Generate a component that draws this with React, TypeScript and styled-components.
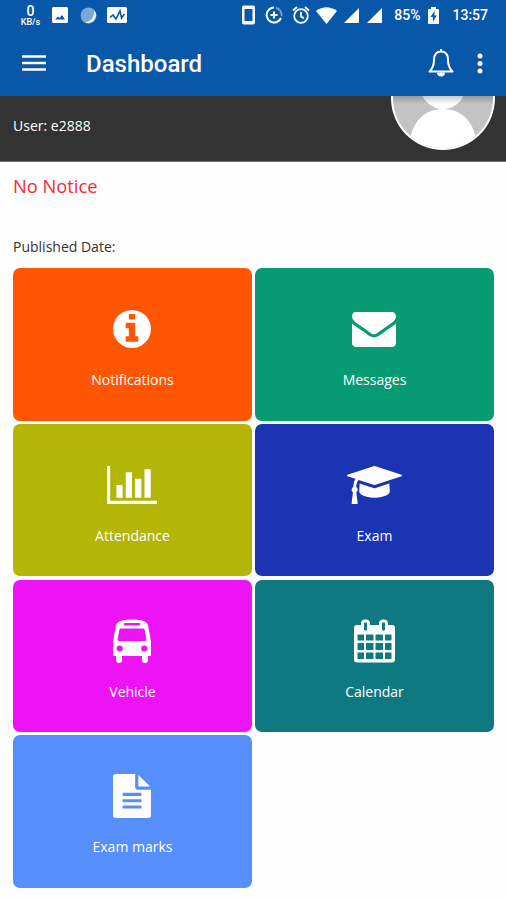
import React from "react";
import styled, { createGlobalStyle } from "styled-components";

const GlobalStyle = createGlobalStyle`
  * { box-sizing: border-box; }
  body { margin: 0; background: #fff; font-family: "Open Sans", "Noto Sans", sans-serif; }
`;

const Screen = styled.div`
  width: 506px;
  height: 900px;
  overflow: hidden;
  background: #fefefe;
`;

const Header = styled.header`
  height: 96px;
  background: #0857a9;
  color: #fff;
  font-family: Roboto, sans-serif;
`;

const StatusBar = styled.div`
  height: 30px;
  padding: 0 18px 0 20px;
  display: flex;
  align-items: center;
  justify-content: space-between;
`;

const StatusGroup = styled.div`
  display: flex;
  align-items: center;
`;

const Speed = styled.div`
  width: 21px;
  display: flex;
  flex-direction: column;
  align-items: center;
  font-weight: 500;
`;

const SpeedValue = styled.span`
  font-size: 14px;
  line-height: 14px;
`;

const SpeedUnit = styled.span`
  font-size: 9px;
  line-height: 9px;
  font-weight: 500;
`;

const StatusText = styled.span<{ $gap: number }>`
  margin-left: ${(p) => p.$gap}px;
  font-size: 14px;
  line-height: 16px;
  font-weight: 500;
  white-space: nowrap;
`;

const Glyph = styled.svg<{ $gap?: number }>`
  display: block;
  flex: none;
  margin-left: ${(p) => p.$gap ?? 0}px;
`;

const AppBar = styled.div`
  height: 66px;
  padding: 0 23px 0 22px;
  display: flex;
  align-items: center;
`;

const Title = styled.h1`
  margin: 1px 0 0 40px;
  flex: 1;
  font-size: 24px;
  line-height: 30px;
  font-weight: 500;
`;

const UserBand = styled.section`
  height: 66px;
  padding: 0 11px 0 13px;
  display: flex;
  justify-content: space-between;
  background: #333;
  border-bottom: 1px solid #777;
  overflow: hidden;
`;

const UserName = styled.div`
  padding-top: 20px;
  color: #fff;
  font-size: 14px;
  line-height: 19px;
`;

const Content = styled.main`
  padding: 0 12px 0 13px;
`;

const Notice = styled.div`
  height: 75px;
  padding-top: 11px;
  color: #fb2733;
  font-size: 18.300px;
  line-height: 25px;
  font-weight: 400;
`;

const Published = styled.div`
  height: 31px;
  color: #333;
  font-size: 14px;
  line-height: 19px;
`;

const Grid = styled.div`
  display: grid;
  grid-template-columns: 239px 239px;
  grid-auto-rows: 152.6px;
  gap: 3.2px 3px;
`;

const Tile = styled.button<{ $color: string }>`
  padding: 39px 0 0;
  border: 0;
  border-radius: 7px;
  background: ${(p) => p.$color};
  color: #fff;
  font: 400 14px/20px "Open Sans", "Noto Sans", sans-serif;
  display: flex;
  flex-direction: column;
  align-items: center;
`;

const IconSlot = styled.span`
  height: 44px;
  margin: 0 1px 19px 0;
  display: flex;
  align-items: center;
`;

type IconSpec = { box: string; w: number; h: number; d: string };

const icons: Record<string, IconSpec> = {
  info: {
    box: "128 128 1536 1536", w: 38, h: 38,
    d: "M1152 1376v-160q0-14-9-23t-23-9h-96v-512q0-14-9-23t-23-9h-320q-14 0-23 9t-9 23v160q0 14 9 23t23 9h96v320h-96q-14 0-23 9t-9 23v160q0 14 9 23t23 9h448q14 0 23-9t9-23zM1024 480v-160q0-14-9-23t-23-9h-192q-14 0-23 9t-9 23v160q0 14 9 23t23 9h192q14 0 23-9t9-23zM1664 896q0 209-103 385.500t-279.500 279.500-385.500 103-385.500-103-279.500-279.500-103-385.500 103-385.500 279.500-279.500 385.500-103 385.500 103 279.500 279.500 103 385.500z",
  },
  envelope: {
    box: "0 256 1792 1408", w: 44, h: 35,
    d: "M1792 710v794q0 66-47 113t-113 47h-1472q-66 0-113-47t-47-113v-794q44 49 101 87 362 246 497 345 57 42 92.500 65.500t94.500 48 110 24.500h2q51 0 110-24.500t94.500-48 92.500-65.500q170-123 498-345 57-39 100-87zM1792 416q0 79-49 151t-122 123q-376 261-468 325-10 7-42.500 31t-54 38.500-52 32.500-57.500 27-50 9h-2q-23 0-50-9t-57.500-27-52-32.500-54-38.500-42.500-31q-91-64-262-182.500t-205-142.500q-62-42-117-115.500t-55-136.500q0-78 41.500-130t118.500-52h1472q65 0 112.500 47t47.500 113z",
  },
  chart: {
    box: "0 128 2048 1536", w: 50, h: 38,
    d: "M640 896v512h-256v-512zM1024 384v1024h-256v-1024zM2048 1536v128h-2048v-1536h128v1408zM1408 640v768h-256v-768zM1792 256v1152h-256v-1152z",
  },
  cap: {
    box: "0 128 2304 1536", w: 55, h: 38,
    d: "M1774 836l18 316q4 69-82 128t-235 93.500-323 34.500-323-34.500-235-93.500-82-128l18-316 574 181q22 7 48 7t48-7zM2304 512q0 23-22 31l-1120 352q-4 1-10 1t-10-1l-652-206q-43 34-71 111.500t-34 178.500q63 36 63 109 0 69-58 107l58 433q2 14-8 25-9 11-24 11h-192q-15 0-24-11-10-11-8-25l58-433q-58-38-58-107 0-73 65-111 11-207 98-330l-333-104q-22-8-22-31t22-31l1120-352q4-1 10-1t10 1l1120 352q22 8 22 31z",
  },
  bus: {
    box: "0 0 38 44", w: 38, h: 44,
    d: "M3 6C4 2 11 .500 19 .500S34 2 35 6L37 17Q38 21 38 27V37H35V41A3 3 0 0 1 29 41V37H9V41A3 3 0 0 1 3 41V37H0V27Q0 21 1 17ZM12 4A1.200 1.200 0 0 0 12 6.400H26A1.200 1.200 0 0 0 26 4ZM8 9.500Q6.700 9.500 6.400 10.800L4.600 20Q4.500 22 6 22H32Q33.500 22 33.400 20L31.600 10.800Q31.300 9.500 30 9.500ZM9.800 29.500A3.100 3.100 0 1 0 3.600 29.500A3.100 3.100 0 1 0 9.800 29.500ZM34.400 29.500A3.100 3.100 0 1 0 28.200 29.500A3.100 3.100 0 1 0 34.400 29.500Z",
  },
  calendar: {
    box: "0 0 41 44", w: 41, h: 44,
    d: "M3 6H7V4A4 4 0 0 1 11 .500H12A4 4 0 0 1 16 4V6H25V4A4 4 0 0 1 29 .500H30A4 4 0 0 1 34 4V6H38A3 3 0 0 1 41 9V40.500A3 3 0 0 1 38 43.500H3A3 3 0 0 1 0 40.500V9A3 3 0 0 1 3 6ZM11 3.500Q10 3.500 10 4.500V10.500Q10 11.500 11 11.500H12Q13 11.500 13 10.500V4.500Q13 3.500 12 3.500ZM29 3.500Q28 3.500 28 4.500V10.500Q28 11.500 29 11.500H30Q31 11.500 31 10.500V4.500Q31 3.500 30 3.500ZM3.500 15.500V21.500H10V15.500ZM12 15.500V21.500H19.500V15.500ZM21.500 15.500V21.500H29V15.500ZM31 15.500V21.500H37.500V15.500ZM3.500 24V31H10V24ZM12 24V31H19.500V24ZM21.500 24V31H29V24ZM31 24V31H37.500V24ZM3.500 33.500V40H10V33.500ZM12 33.500V40H19.500V33.500ZM21.500 33.500V40H29V33.500ZM31 33.500V40H37.500V33.500Z",
  },
  file: {
    box: "128 0 1536 1792", w: 38, h: 44,
    d: "M1596 476q14 14 28 36h-472v-472q22 14 36 28zM1120 640h544v1056q0 40-28 68t-68 28h-1344q-40 0-68-28t-28-68v-1600q0-40 28-68t68-28h800v544q0 40 28 68t68 28zM1280 1376v-64q0-14-9-23t-23-9h-704q-14 0-23 9t-9 23v64q0 14 9 23t23 9h704q14 0 23-9t9-23zM1280 1120v-64q0-14-9-23t-23-9h-704q-14 0-23 9t-9 23v64q0 14 9 23t23 9h704q14 0 23-9t9-23zM1280 864v-64q0-14-9-23t-23-9h-704q-14 0-23 9t-9 23v64q0 14 9 23t23 9h704q14 0 23-9t9-23z",
  },
};

const tiles = [
  { label: "Notifications", color: "#ff5604", icon: "info" },
  { label: "Messages", color: "#069b70", icon: "envelope" },
  { label: "Attendance", color: "#b3b507", icon: "chart" },
  { label: "Exam", color: "#1a34b3", icon: "cap" },
  { label: "Vehicle", color: "#ed13f5", icon: "bus" },
  { label: "Calendar", color: "#0f7982", icon: "calendar" },
  { label: "Exam marks", color: "#568ffb", icon: "file" },
];

function TileIcon({ name }: { name: string }) {
  const i = icons[name];
  return (
    <Glyph width={i.w} height={i.h} viewBox={i.box} preserveAspectRatio="none" fill="#fff">
      <path fillRule="evenodd" d={i.d} />
    </Glyph>
  );
}

function StatusIcons() {
  return (
    <StatusBar>
      <StatusGroup>
        <Speed>
          <SpeedValue>0</SpeedValue>
          <SpeedUnit>KB/s</SpeedUnit>
        </Speed>
        <Glyph $gap={11} width="16" height="16" viewBox="0 0 16 16">
          <rect width="16" height="16" rx="1.500" fill="#fff" />
          <path d="M3 12.500L6 9.500L7.500 11L10 8L13 12.500Z" fill="#0857a9" />
        </Glyph>
        <Glyph $gap={12} width="17" height="17" viewBox="0 0 17 17">
          <circle cx="8.500" cy="8.500" r="8" fill="#79a9d8" />
          <path d="M14.500 3.500A8 8 0 0 1 5 15.500Q14 14 14.500 3.500Z" fill="#e5f0fa" />
        </Glyph>
        <Glyph $gap={10} width="20" height="16" viewBox="0 0 20 16">
          <rect width="20" height="16" rx="1.500" fill="#fff" />
          <path d="M3 10.500L6 8L9 12L13 4L14.500 11L17.500 7" fill="none" stroke="#0857a9" strokeWidth="1.600" />
        </Glyph>
      </StatusGroup>
      <StatusGroup>
        <Glyph width="13" height="20" viewBox="0 0 13 20">
          <path fillRule="evenodd" fill="#fff" d="M2 .500H11Q13 .500 13 2.500V17.500Q13 19.500 11 19.500H2Q0 19.500 0 17.500V2.500Q0 .500 2 .500ZM2.500 4V16H10.500V4Z" />
        </Glyph>
        <Glyph $gap={10} width="18" height="18" viewBox="0 0 18 18" fill="none" stroke="#fff" strokeWidth="2">
          <path d="M9 1.500A7.500 7.500 0 1 0 16 12M9 5.500V12.500M5.500 9H12.500" />
          <path d="M11 1.800A7.500 7.500 0 0 1 16.500 10" stroke="#6aa0d4" />
        </Glyph>
        <Glyph $gap={9} width="18" height="18" viewBox="0 0 18 18" fill="none" stroke="#fff" strokeWidth="1.800">
          <circle cx="9" cy="10" r="6.800" />
          <path d="M9 6V10.500L12 12.200M1 4.500L5 1M17 4.500L13 1" />
        </Glyph>
        <Glyph $gap={6} width="21" height="17" viewBox="0 0 21 17" fill="#fff">
          <path d="M0 4Q10.500-3.500 21 4L10.500 17Z" />
        </Glyph>
        <Glyph $gap={7} width="15" height="15" viewBox="0 0 15 15" fill="#fff"><path d="M0 15L15 0V15Z" /></Glyph>
        <Glyph $gap={8} width="15" height="15" viewBox="0 0 15 15" fill="#fff"><path d="M0 15L15 0V15Z" /></Glyph>
        <StatusText $gap={12}>85%</StatusText>
        <Glyph $gap={8} width="11" height="17" viewBox="0 0 11 17">
          <path fill="#fff" d="M3 0H8V2H10Q11 2 11 3V16Q11 17 10 17H1Q0 17 0 16V3Q0 2 1 2H3Z" />
          <path fill="#0857a9" d="M6.500 4L2.500 10H5V15L8.700 8.500H6.500Z" />
        </Glyph>
        <StatusText $gap={13}>13:57</StatusText>
      </StatusGroup>
    </StatusBar>
  );
}

export default function App() {
  return (
    <>
      <GlobalStyle />
      <Screen>
        <Header>
          <StatusIcons />
          <AppBar>
            <Glyph width="24" height="16" viewBox="0 0 24 16" stroke="#fff" strokeWidth="2.300">
              <path d="M0 1.500H24M0 8H24M0 14.500H24" />
            </Glyph>
            <Title>Dashboard</Title>
            <Glyph width="26" height="28" viewBox="0 0 26 28" fill="none" stroke="#fff" strokeWidth="2">
              <path d="M13 2.500C8 2.500 6 6.500 6 11C6 17 4 20 1.500 22.500H24.500C22 20 20 17 20 11C20 6.500 18 2.500 13 2.500ZM13 0V3" strokeLinejoin="round" />
              <path d="M9 23.500A4 4 0 0 0 17 23.500Z" fill="#fff" stroke="none" />
            </Glyph>
            <Glyph $gap={23} width="6" height="21" viewBox="0 0 6 21" fill="#fff">
              <circle cx="3" cy="3" r="2.500" /><circle cx="3" cy="10.500" r="2.500" /><circle cx="3" cy="18" r="2.500" />
            </Glyph>
          </AppBar>
        </Header>
        <UserBand>
          <UserName>User: e2888</UserName>
          <Glyph width="104" height="55" viewBox="0 0 104 55">
            <defs>
              <clipPath id="avatar"><circle cx="52" cy="2" r="50" /></clipPath>
              <linearGradient id="shade" x1="0" y1="0" x2="0" y2="1">
                <stop offset="0" stopColor="#000" stopOpacity=".22" />
                <stop offset="1" stopColor="#000" stopOpacity="0" />
              </linearGradient>
            </defs>
            <circle cx="52" cy="2" r="52" fill="#fff" />
            <g clipPath="url(#avatar)">
              <rect width="104" height="55" fill="#c3c3c3" />
              <ellipse cx="52" cy="-8" rx="22" ry="21" fill="#fff" />
              <path d="M18 55C18 28 32 13 52 13S86 28 86 55Z" fill="#fff" />
              <rect width="104" height="8" fill="url(#shade)" />
            </g>
          </Glyph>
        </UserBand>
        <Content>
          <Notice>No Notice</Notice>
          <Published>Published Date:</Published>
          <Grid>
            {tiles.map((t) => (
              <Tile key={t.label} $color={t.color}>
                <IconSlot><TileIcon name={t.icon} /></IconSlot>
                {t.label}
              </Tile>
            ))}
          </Grid>
        </Content>
      </Screen>
    </>
  );
}
